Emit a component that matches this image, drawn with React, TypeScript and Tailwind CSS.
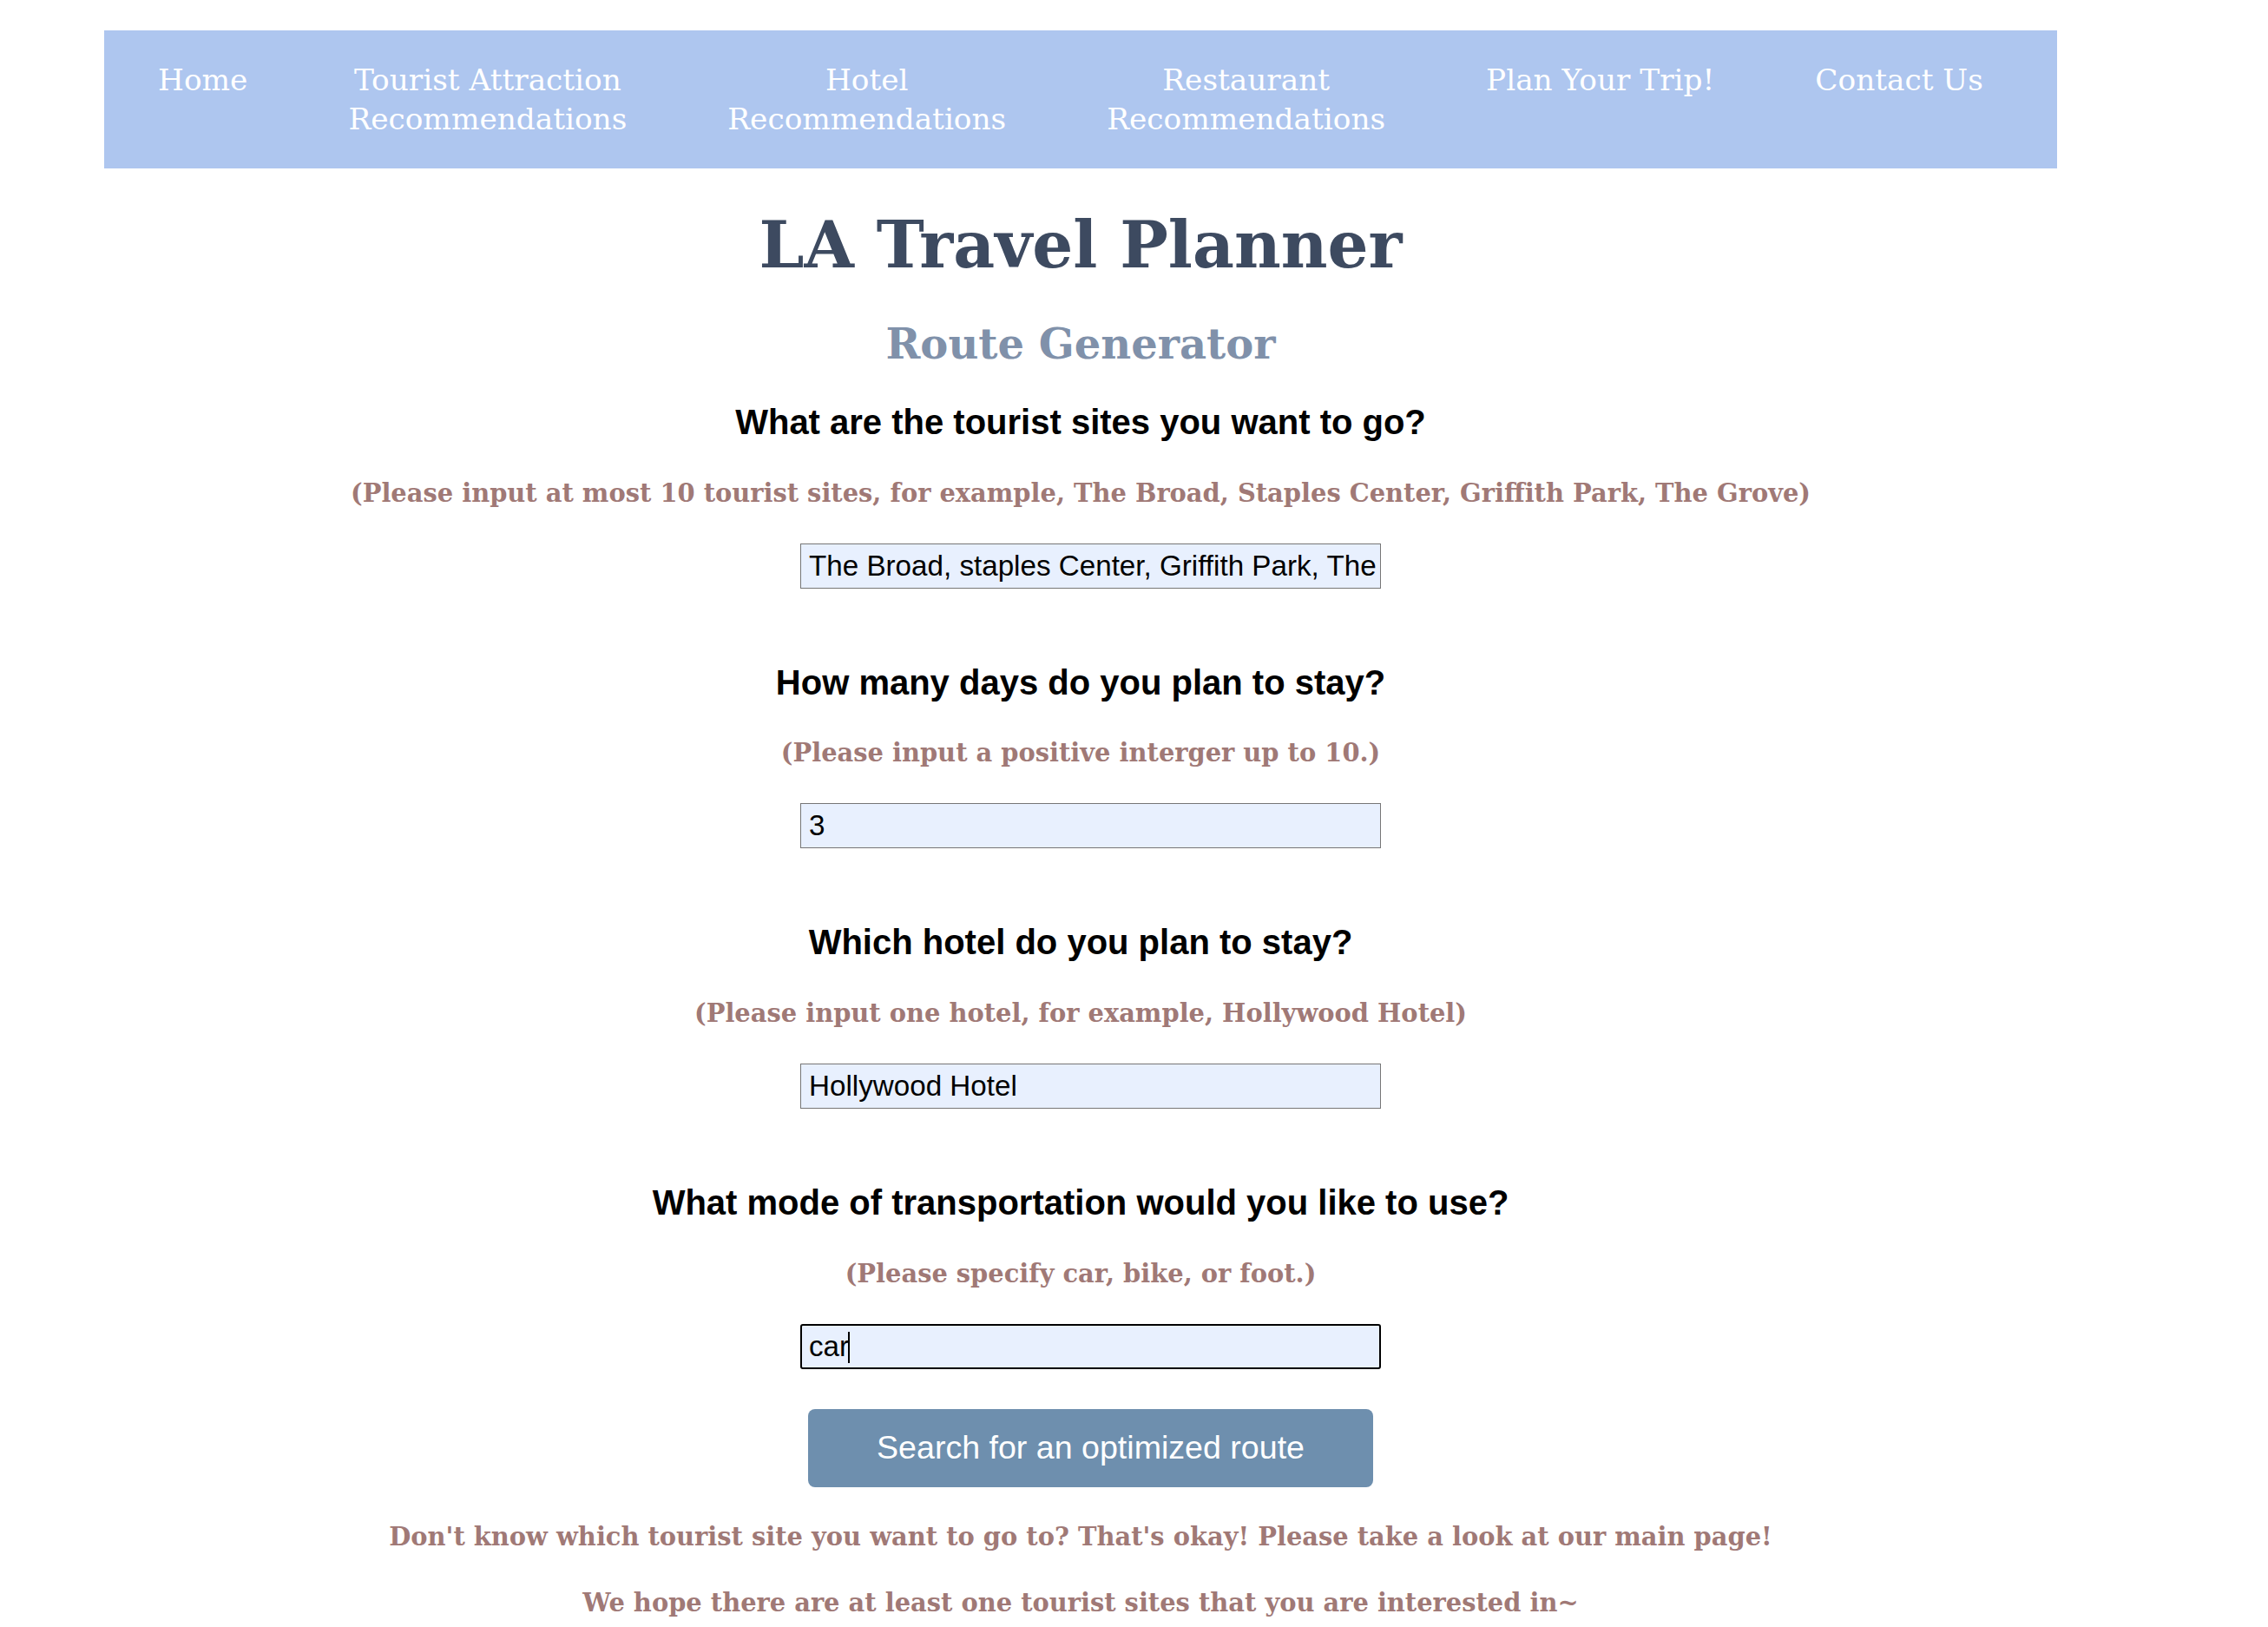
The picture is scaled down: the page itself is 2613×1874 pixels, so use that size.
import React from 'react';

const serif = "font-['DejaVu_Serif',serif]";
const sans = "font-['Liberation_Sans',Arial,sans-serif]";

const navItems: string[][] = [
  ['Home'],
  ['Tourist Attraction', 'Recommendations'],
  ['Hotel', 'Recommendations'],
  ['Restaurant', 'Recommendations'],
  ['Plan Your Trip!'],
  ['Contact Us'],
];

type Field = {
  question: string;
  hint: string;
  value: string;
  focused?: boolean;
};

const fields: Field[] = [
  {
    question: 'What are the tourist sites you want to go?',
    hint: '(Please input at most 10 tourist sites, for example, The Broad, Staples Center, Griffith Park, The Grove)',
    value: 'The Broad, staples Center, Griffith Park, The Grove',
  },
  {
    question: 'How many days do you plan to stay?',
    hint: '(Please input a positive interger up to 10.)',
    value: '3',
  },
  {
    question: 'Which hotel do you plan to stay?',
    hint: '(Please input one hotel, for example, Hollywood Hotel)',
    value: 'Hollywood Hotel',
  },
  {
    question: 'What mode of transportation would you like to use?',
    hint: '(Please specify car, bike, or foot.)',
    value: 'car',
    focused: true,
  },
];

function NavBar() {
  return (
    <nav className="flex items-start bg-[#aec6ef] pl-[4px] pt-[35px] pb-[34px]">
      {navItems.map((lines, i) => (
        <a
          key={i}
          href="#"
          className={`${serif} px-[58px] text-center text-[34.3px] leading-[45px] text-white whitespace-nowrap`}
        >
          {lines.map((l, j) => (
            <React.Fragment key={j}>
              {j > 0 && <br />}
              {l}
            </React.Fragment>
          ))}
        </a>
      ))}
    </nav>
  );
}

function FormBlock({ field, first }: { field: Field; first: boolean }) {
  return (
    <div className={`flex flex-col items-center ${first ? 'mt-[39px]' : 'mt-[85.2px]'}`}>
      <h3 className={`${sans} text-[40px] leading-[46px] font-bold text-black`}>{field.question}</h3>
      <p className={`${serif} mt-[41.5px] text-[28.9px] leading-[34px] font-bold text-[#a07976]`}>{field.hint}</p>
      <div className="relative mt-[41px] ml-[23px]">
        <input
          type="text"
          readOnly
          defaultValue={field.value}
          className={`${sans} block h-[52px] w-[669px] bg-[#e8f0fe] text-[33.2px] text-black outline-none ${
            field.focused
              ? 'rounded-[3px] border-2 border-black pl-[8px]'
              : 'border border-[#767676] pl-[9px]'
          }`}
        />
        {field.focused && (
          <span className="absolute left-[55px] top-[9px] h-[36px] w-[2px] bg-black" />
        )}
      </div>
    </div>
  );
}

export default function App() {
  return (
    <div className="min-h-screen bg-white">
      <div className="ml-[120px] w-[2250px] pt-[35px] pb-[20px]">
        <NavBar />

        <main className="flex flex-col items-center">
          <h1 className={`${serif} mt-[44px] text-[74px] leading-[88px] font-bold text-[#3d4a60]`}>
            LA Travel Planner
          </h1>
          <h2 className={`${serif} mt-[42px] text-[48px] leading-[56px] font-bold text-[#8091aa]`}>
            Route Generator
          </h2>

          {fields.map((f, i) => (
            <FormBlock key={i} field={f} first={i === 0} />
          ))}

          <button
            type="button"
            className={`${sans} mt-[46px] ml-[23px] h-[90px] w-[651px] rounded-[8px] bg-[#6e8fae] text-[37.6px] text-white`}
          >
            Search for an optimized route
          </button>

          <p className={`${serif} mt-[40.5px] text-[28.9px] leading-[34px] font-bold text-[#a07976]`}>
            Don't know which tourist site you want to go to? That's okay! Please take a look at our main page!
          </p>
          <p className={`${serif} mt-[42px] text-[28.9px] leading-[34px] font-bold text-[#a07976]`}>
            We hope there are at least one tourist sites that you are interested in~
          </p>
        </main>
      </div>
    </div>
  );
}
